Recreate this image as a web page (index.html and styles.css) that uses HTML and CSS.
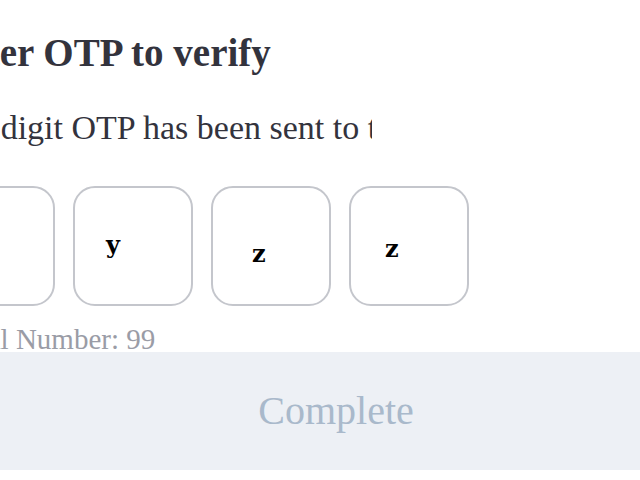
FILE: index.html
```html
<!DOCTYPE html>
<html>
<head>
    <title>Verify OTP</title>
    <link rel="stylesheet" href="styles.css">
</head>
<body>

<div class="otp-page">
    <h1 class="otp-title">Enter OTP to verify</h1>
    <div class="otp-subtitle">A 4 digit OTP has been sent to the registered number</div>

    <div class="otp-boxes">
        <div class="otp-box"></div>
        <div class="otp-box pos-a"><span>y</span></div>
        <div class="otp-box pos-b"><span>z</span></div>
        <div class="otp-box pos-c"><span>z</span></div>
    </div>

    <div class="serial">Serial Number: 99</div>
    <div class="complete-btn">Complete</div>
</div>

</body>
</html>
```

FILE: styles.css
```css
body {
    margin: 0;
    padding: 0;
    background-color: #fff;
    font-family: 'Liberation Serif', serif;
    overflow: hidden;
}

.otp-page {
    margin-left: -65px;
    width: 802px;
    padding-top: 31px;
}

.otp-title {
    margin: 0;
    padding-left: 4px;
    font-size: 39px;
    line-height: 44px;
    font-weight: bold;
    color: #33333d;
}

.otp-subtitle {
    margin-top: 33px;
    padding-left: 9px;
    width: 428px;
    overflow: hidden;
    white-space: nowrap;
    font-size: 34px;
    line-height: 40px;
    color: #33333d;
}

.otp-boxes {
    display: flex;
    gap: 18px;
    margin-top: 38px;
}

.otp-box {
    box-sizing: border-box;
    width: 120px;
    height: 120px;
    border: 2px solid #c4c6cc;
    border-radius: 22px;
    font-family: 'DejaVu Serif', serif;
    font-weight: bold;
    font-size: 24px;
    line-height: 24px;
    color: #000;
}

.pos-a {
    padding: 45px 0 0 31px;
}

.pos-b {
    padding: 54px 0 0 39px;
}

.pos-c {
    padding: 49px 0 0 34px;
}

.serial {
    margin-top: 21px;
    padding-left: 6px;
    font-size: 29px;
    line-height: 25px;
    color: #9a9ca6;
}

.complete-btn {
    background-color: #edf0f5;
    height: 118px;
    line-height: 118px;
    text-align: center;
    font-size: 40px;
    color: #a9b9cb;
}
```
